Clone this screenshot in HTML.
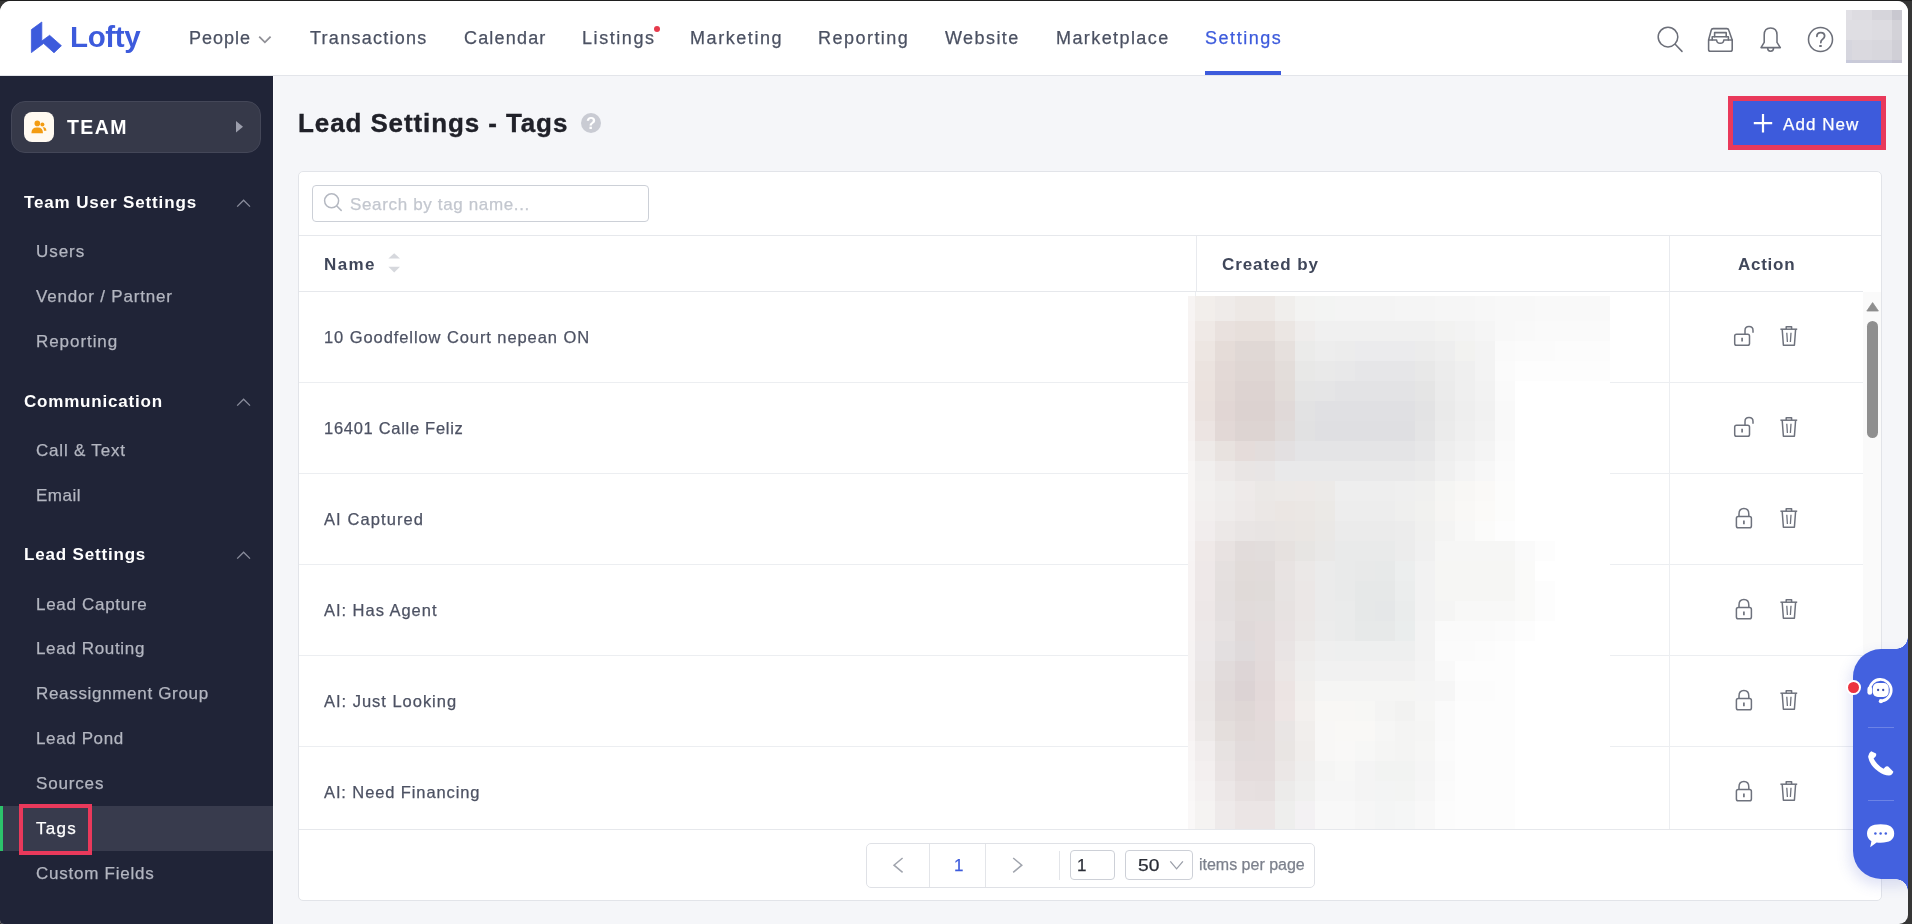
<!DOCTYPE html>
<html><head><meta charset="utf-8"><title>Lead Settings - Tags</title>
<style>
html,body{margin:0;padding:0;}
body{width:1912px;height:924px;overflow:hidden;background:#363636;position:relative;font-family:"Liberation Sans",sans-serif;}
#win{position:absolute;left:0;top:1px;width:1908px;height:923px;border-radius:11px 11px 9px 4px;overflow:hidden;background:#f5f6f9;}
#in{position:absolute;left:0;top:-1px;width:1912px;height:924px;}
.a{position:absolute;box-sizing:border-box;}
.t{position:absolute;white-space:nowrap;line-height:1;font-family:"Liberation Sans",sans-serif;-webkit-font-smoothing:antialiased;will-change:transform;}
svg{position:absolute;overflow:visible;}
</style></head><body>
<div class="a" style="left:0;top:0;width:1912px;height:1px;background:#1f1f1f;"></div>
<div id="win"><div id="in">
<!-- header -->
<div class="a" style="left:0;top:0;width:1912px;height:75px;background:#fff;"></div>
<div class="a" style="left:0;top:75px;width:1912px;height:1px;background:#e3e5ea;"></div>
<svg style="left:0;top:0" width="80" height="70" viewBox="0 0 80 70"><polygon points="31.4,29.6 41.8,22 41.8,41 49.6,35.3 61.4,45.7 54,52.8 43.6,43.4 31.4,52.6" fill="#3d5bdc" stroke="#3d5bdc" stroke-width="0.8" stroke-linejoin="round"/></svg>
<svg style="left:0;top:0" width="300" height="70"><polyline points="259.2,36.6 264.9,42.3 270.6,36.6" fill="none" stroke="#909097" stroke-width="1.8"/></svg>
<div class="a" style="left:653.5px;top:25.7px;width:6px;height:6px;border-radius:50%;background:#e63a4c;"></div>
<div class="a" style="left:1205px;top:71px;width:76px;height:4px;background:#3d5bdc;"></div>
<!-- header icons -->
<svg style="left:1650px;top:20px" width="250" height="40" viewBox="1650 20 250 40" fill="none" stroke="#6c6f79" stroke-width="1.55" stroke-linecap="round" stroke-linejoin="round">
  <circle cx="1668" cy="37.1" r="9.8"/><line x1="1675.2" y1="44.3" x2="1682" y2="51.4"/>
  <path d="M1708.6 40 L1711.2 30.2 Q1711.6 28.6 1713.2 28.6 L1726.8 28.6 Q1728.4 28.6 1728.8 30.2 L1732.2 40 L1732.2 49.4 Q1732.2 51.2 1730.4 51.2 L1710.4 51.2 Q1708.6 51.2 1708.6 49.4 Z"/>
  <path d="M1708.8 40 L1716.6 40 Q1716.8 43.3 1720.2 43.3 Q1723.6 43.3 1723.8 40 L1732.2 40"/>
  <path d="M1712.2 40 L1712.2 36.8 L1728.4 36.8 L1728.4 40"/><path d="M1714.6 36.8 L1714.6 32.6 L1726.2 32.6 L1726.2 36.8"/>
  <path d="M1761 47.6 L1764.2 42.4 L1764.2 35 Q1764.2 28 1770.6 28 Q1777 28 1777 35 L1777 42.4 L1780.3 47.6 Z"/>
  <path d="M1767.6 47.8 Q1767.6 51.2 1770.6 51.2 Q1773.6 51.2 1773.6 47.8"/>
  <circle cx="1820.5" cy="39.5" r="12"/>
  <path d="M1816.9 36.3 Q1816.9 32.7 1820.8 32.7 Q1824.6 32.7 1824.6 36.1 Q1824.6 38.1 1822.6 39.3 Q1820.8 40.3 1820.8 42.6" stroke-width="1.8"/>
</svg>
<div class="a" style="left:1819.4px;top:44.6px;width:2.8px;height:2.8px;border-radius:50%;background:#6c6f79;"></div>
<!-- avatar pixelated -->
<svg style="left:1846px;top:10px" width="56" height="53" shape-rendering="crispEdges">
<rect x="0" y="0" width="6" height="10" fill="#e1e0e5"/>
<rect x="6" y="0" width="20" height="10" fill="#dddce1"/>
<rect x="26" y="0" width="20" height="10" fill="#d6d5db"/>
<rect x="46" y="0" width="10" height="10" fill="#c9c8d0"/>
<rect x="0" y="10" width="6" height="20" fill="#dfdee3"/>
<rect x="6" y="10" width="20" height="20" fill="#dfdee3"/>
<rect x="26" y="10" width="20" height="20" fill="#dddce1"/>
<rect x="46" y="10" width="10" height="20" fill="#d3d2d8"/>
<rect x="0" y="30" width="6" height="20" fill="#d6d6de"/>
<rect x="6" y="30" width="20" height="20" fill="#dad9df"/>
<rect x="26" y="30" width="20" height="20" fill="#d8d7dd"/>
<rect x="46" y="30" width="10" height="20" fill="#d0cfd6"/>
<rect x="0" y="50" width="6" height="3" fill="#c8cadb"/>
<rect x="6" y="50" width="20" height="3" fill="#c9cad8"/>
<rect x="26" y="50" width="20" height="3" fill="#c9cad8"/>
<rect x="46" y="50" width="10" height="3" fill="#c5c4d2"/>
</svg>

<!-- sidebar -->
<div class="a" style="left:0;top:76px;width:273px;height:848px;background:#202437;"></div>
<div class="a" style="left:273px;top:76px;width:1px;height:848px;background:#fbfbfd;"></div>
<div class="a" style="left:11px;top:101px;width:250px;height:52px;border-radius:14px;background:#363949;border:1px solid #444758;"></div>
<div class="a" style="left:24px;top:112px;width:30px;height:30px;border-radius:8px;background:#fffaf1;"></div>
<svg style="left:0;top:0" width="60" height="150">
  <circle cx="37.3" cy="123.4" r="2.8" fill="#f39c12"/>
  <path d="M31.4 133.2 Q31.4 127.6 36.7 127.6 L37.9 127.6 Q43 127.6 43 133.2 Z" fill="#f39c12"/>
  <circle cx="42.4" cy="124.6" r="2" fill="#f39c12"/>
  <path d="M43.6 127.2 Q46.4 127.6 46.4 130.8 L44 130.8 Q44 128.6 42.6 127.6 Z" fill="#f39c12"/>
</svg>
<svg style="left:0;top:0" width="273" height="600">
  <polygon points="236,121 243,126.8 236,132.6" fill="#9c9eac"/>
  <polyline points="237.2,206.6 243.6,200.2 250,206.6" fill="none" stroke="#8a8d9c" stroke-width="1.3"/>
  <polyline points="237.2,405.6 243.6,399.2 250,405.6" fill="none" stroke="#8a8d9c" stroke-width="1.3"/>
  <polyline points="237.2,558.6 243.6,552.2 250,558.6" fill="none" stroke="#8a8d9c" stroke-width="1.3"/>
</svg>
<div class="a" style="left:0;top:806px;width:273px;height:45px;background:#383b4d;"></div>
<div class="a" style="left:0;top:806px;width:3px;height:45px;background:#2cc36b;"></div>
<div class="a" style="left:19px;top:804px;width:73px;height:51px;border:4.5px solid #e9395b;"></div>

<!-- content -->
<div class="a" style="left:581px;top:113px;width:20.2px;height:20.2px;border-radius:50%;background:#c9cbd3;"></div>
<div class="t" style="left:586px;top:114.6px;font-size:16.5px;font-weight:700;color:#fff;">?</div>
<div class="a" style="left:1728px;top:96px;width:158px;height:54px;background:#e9395b;"></div>
<div class="a" style="left:1733px;top:101px;width:148px;height:44px;background:#3d5bdc;"></div>
<svg style="left:0;top:0" width="1900" height="150"><path d="M1763 114 L1763 132.4 M1753.8 123.2 L1772.2 123.2" stroke="#fff" stroke-width="2.2"/></svg>

<div class="a" style="left:298px;top:171px;width:1584px;height:730px;background:#fff;border:1px solid #e2e4e9;border-radius:5px;"></div>
<div class="a" style="left:312px;top:185px;width:337px;height:37px;border:1px solid #ccd0d7;border-radius:4px;background:#fff;"></div>
<svg style="left:0;top:0" width="400" height="240" fill="none" stroke="#b4b8c1" stroke-width="1.5" stroke-linecap="round"><circle cx="331.6" cy="200.8" r="7"/><line x1="336.8" y1="206" x2="341.2" y2="210.4"/></svg>
<div class="a" style="left:299px;top:235px;width:1582px;height:1px;background:#e6e8ec;"></div>
<div class="a" style="left:299px;top:291px;width:1564px;height:1px;background:#e6e8ec;"></div>
<div class="a" style="left:1196px;top:236px;width:1px;height:55px;background:#e8eaee;"></div>
<div class="a" style="left:1669px;top:236px;width:1px;height:55px;background:#e8eaee;"></div>
<div class="a" style="left:1195px;top:292px;width:1px;height:537px;background:#eceef1;"></div>
<div class="a" style="left:1669px;top:292px;width:1px;height:537px;background:#eceef1;"></div>
<div class="a" style="left:299px;top:382px;width:1564px;height:1px;background:#eceef1;"></div>
<div class="a" style="left:299px;top:473px;width:1564px;height:1px;background:#eceef1;"></div>
<div class="a" style="left:299px;top:564px;width:1564px;height:1px;background:#eceef1;"></div>
<div class="a" style="left:299px;top:655px;width:1564px;height:1px;background:#eceef1;"></div>
<div class="a" style="left:299px;top:746px;width:1564px;height:1px;background:#eceef1;"></div>
<div class="a" style="left:299px;top:829px;width:1582px;height:1px;background:#e6e8ec;"></div>
<svg style="left:0;top:0" width="420" height="300"><polygon points="388.4,258.6 394.2,253.2 400,258.6" fill="#d6d8dd"/><polygon points="388.4,266.8 394.2,272.4 400,266.8" fill="#d6d8dd"/></svg>
<svg style="left:1188px;top:296px" width="422" height="533" shape-rendering="crispEdges">
<rect x="0" y="0" width="7" height="25" fill="#f7f4f3"/>
<rect x="7" y="0" width="20" height="25" fill="#f2eeeb"/>
<rect x="27" y="0" width="20" height="25" fill="#efebe9"/>
<rect x="47" y="0" width="20" height="25" fill="#ede8e5"/>
<rect x="67" y="0" width="20" height="25" fill="#ede8e5"/>
<rect x="87" y="0" width="20" height="25" fill="#f0eeec"/>
<rect x="107" y="0" width="20" height="25" fill="#f3f3f2"/>
<rect x="127" y="0" width="20" height="25" fill="#f3f4f3"/>
<rect x="147" y="0" width="20" height="25" fill="#f4f4f4"/>
<rect x="167" y="0" width="20" height="25" fill="#f4f4f4"/>
<rect x="187" y="0" width="20" height="25" fill="#f4f4f4"/>
<rect x="207" y="0" width="20" height="25" fill="#f5f5f5"/>
<rect x="227" y="0" width="20" height="25" fill="#f5f5f5"/>
<rect x="247" y="0" width="20" height="25" fill="#f6f6f6"/>
<rect x="267" y="0" width="20" height="25" fill="#f6f6f6"/>
<rect x="287" y="0" width="20" height="25" fill="#f7f7f7"/>
<rect x="307" y="0" width="20" height="25" fill="#f8f8f8"/>
<rect x="327" y="0" width="20" height="25" fill="#f8f8f8"/>
<rect x="347" y="0" width="20" height="25" fill="#f9f9f9"/>
<rect x="367" y="0" width="20" height="25" fill="#f9f9f9"/>
<rect x="387" y="0" width="20" height="25" fill="#f9f9f9"/>
<rect x="407" y="0" width="15" height="25" fill="#f9f9f9"/>
<rect x="0" y="25" width="7" height="20" fill="#f7f3f2"/>
<rect x="7" y="25" width="20" height="20" fill="#efe9e6"/>
<rect x="27" y="25" width="20" height="20" fill="#e9e1de"/>
<rect x="47" y="25" width="20" height="20" fill="#e7dfdb"/>
<rect x="67" y="25" width="20" height="20" fill="#e7dfdb"/>
<rect x="87" y="25" width="20" height="20" fill="#ebe6e3"/>
<rect x="107" y="25" width="20" height="20" fill="#efedec"/>
<rect x="127" y="25" width="20" height="20" fill="#f0f0f0"/>
<rect x="147" y="25" width="20" height="20" fill="#f0f0f0"/>
<rect x="167" y="25" width="20" height="20" fill="#f0f0f0"/>
<rect x="187" y="25" width="20" height="20" fill="#f0f0f0"/>
<rect x="207" y="25" width="20" height="20" fill="#f0f0f0"/>
<rect x="227" y="25" width="20" height="20" fill="#f0f0f0"/>
<rect x="247" y="25" width="20" height="20" fill="#f2f2f1"/>
<rect x="267" y="25" width="20" height="20" fill="#f3f3f3"/>
<rect x="287" y="25" width="20" height="20" fill="#f5f5f5"/>
<rect x="307" y="25" width="20" height="20" fill="#f8f8f8"/>
<rect x="327" y="25" width="20" height="20" fill="#f9f9f9"/>
<rect x="347" y="25" width="20" height="20" fill="#fafafa"/>
<rect x="367" y="25" width="20" height="20" fill="#fafafa"/>
<rect x="387" y="25" width="20" height="20" fill="#fafafa"/>
<rect x="407" y="25" width="15" height="20" fill="#fafafa"/>
<rect x="0" y="45" width="7" height="20" fill="#f7f2f1"/>
<rect x="7" y="45" width="20" height="20" fill="#ede6e2"/>
<rect x="27" y="45" width="20" height="20" fill="#e5dcd8"/>
<rect x="47" y="45" width="20" height="20" fill="#e0d8d5"/>
<rect x="67" y="45" width="20" height="20" fill="#e0d8d5"/>
<rect x="87" y="45" width="20" height="20" fill="#e6e0dd"/>
<rect x="107" y="45" width="20" height="20" fill="#ebebea"/>
<rect x="127" y="45" width="20" height="20" fill="#ededed"/>
<rect x="147" y="45" width="20" height="20" fill="#ececec"/>
<rect x="167" y="45" width="20" height="20" fill="#ebebed"/>
<rect x="187" y="45" width="20" height="20" fill="#ebebed"/>
<rect x="207" y="45" width="20" height="20" fill="#ebebed"/>
<rect x="227" y="45" width="20" height="20" fill="#ececec"/>
<rect x="247" y="45" width="20" height="20" fill="#eeeeee"/>
<rect x="267" y="45" width="20" height="20" fill="#f2f2f0"/>
<rect x="287" y="45" width="20" height="20" fill="#f3f3f3"/>
<rect x="307" y="45" width="20" height="20" fill="#fafafa"/>
<rect x="327" y="45" width="20" height="20" fill="#fbfbfb"/>
<rect x="347" y="45" width="20" height="20" fill="#fbfbfb"/>
<rect x="367" y="45" width="20" height="20" fill="#fcfcfc"/>
<rect x="387" y="45" width="20" height="20" fill="#fcfcfc"/>
<rect x="407" y="45" width="15" height="20" fill="#fcfcfc"/>
<rect x="0" y="65" width="7" height="20" fill="#f7f2f1"/>
<rect x="7" y="65" width="20" height="20" fill="#ebe3df"/>
<rect x="27" y="65" width="20" height="20" fill="#e3d9d6"/>
<rect x="47" y="65" width="20" height="20" fill="#dfd6d3"/>
<rect x="67" y="65" width="20" height="20" fill="#dfd6d3"/>
<rect x="87" y="65" width="20" height="20" fill="#e3ddda"/>
<rect x="107" y="65" width="20" height="20" fill="#e8e8e7"/>
<rect x="127" y="65" width="20" height="20" fill="#e9e9e9"/>
<rect x="147" y="65" width="20" height="20" fill="#e8e8e9"/>
<rect x="167" y="65" width="20" height="20" fill="#e6e6e8"/>
<rect x="187" y="65" width="20" height="20" fill="#e6e6e8"/>
<rect x="207" y="65" width="20" height="20" fill="#e6e6e8"/>
<rect x="227" y="65" width="20" height="20" fill="#e8e8e8"/>
<rect x="247" y="65" width="20" height="20" fill="#ececec"/>
<rect x="267" y="65" width="20" height="20" fill="#efefef"/>
<rect x="287" y="65" width="20" height="20" fill="#f3f3f3"/>
<rect x="307" y="65" width="20" height="20" fill="#fbfbfb"/>
<rect x="327" y="65" width="20" height="20" fill="#fdfdfd"/>
<rect x="347" y="65" width="20" height="20" fill="#fdfdfd"/>
<rect x="367" y="65" width="20" height="20" fill="#fdfdfd"/>
<rect x="387" y="65" width="20" height="20" fill="#fdfdfd"/>
<rect x="407" y="65" width="15" height="20" fill="#fdfdfd"/>
<rect x="0" y="85" width="7" height="20" fill="#f6f1f0"/>
<rect x="7" y="85" width="20" height="20" fill="#ebe2de"/>
<rect x="27" y="85" width="20" height="20" fill="#e2d8d5"/>
<rect x="47" y="85" width="20" height="20" fill="#ddd3d1"/>
<rect x="67" y="85" width="20" height="20" fill="#ddd3d1"/>
<rect x="87" y="85" width="20" height="20" fill="#e2dcd9"/>
<rect x="107" y="85" width="20" height="20" fill="#e5e5e5"/>
<rect x="127" y="85" width="20" height="20" fill="#e5e5e6"/>
<rect x="147" y="85" width="20" height="20" fill="#e3e3e5"/>
<rect x="167" y="85" width="20" height="20" fill="#e3e3e5"/>
<rect x="187" y="85" width="20" height="20" fill="#e3e3e5"/>
<rect x="207" y="85" width="20" height="20" fill="#e3e3e5"/>
<rect x="227" y="85" width="20" height="20" fill="#e5e5e5"/>
<rect x="247" y="85" width="20" height="20" fill="#ebebeb"/>
<rect x="267" y="85" width="20" height="20" fill="#efefef"/>
<rect x="287" y="85" width="20" height="20" fill="#f2f2f2"/>
<rect x="307" y="85" width="20" height="20" fill="#fafafa"/>
<rect x="327" y="85" width="20" height="20" fill="#ffffff"/>
<rect x="347" y="85" width="20" height="20" fill="#ffffff"/>
<rect x="367" y="85" width="20" height="20" fill="#ffffff"/>
<rect x="387" y="85" width="20" height="20" fill="#ffffff"/>
<rect x="407" y="85" width="15" height="20" fill="#ffffff"/>
<rect x="0" y="105" width="7" height="20" fill="#f6f1f0"/>
<rect x="7" y="105" width="20" height="20" fill="#eae1de"/>
<rect x="27" y="105" width="20" height="20" fill="#e1d6d4"/>
<rect x="47" y="105" width="20" height="20" fill="#dcd2d0"/>
<rect x="67" y="105" width="20" height="20" fill="#dcd2d0"/>
<rect x="87" y="105" width="20" height="20" fill="#e0d9d8"/>
<rect x="107" y="105" width="20" height="20" fill="#e2e2e3"/>
<rect x="127" y="105" width="20" height="20" fill="#e0e0e3"/>
<rect x="147" y="105" width="20" height="20" fill="#e0e0e3"/>
<rect x="167" y="105" width="20" height="20" fill="#e0e0e3"/>
<rect x="187" y="105" width="20" height="20" fill="#e0e0e3"/>
<rect x="207" y="105" width="20" height="20" fill="#e0e0e3"/>
<rect x="227" y="105" width="20" height="20" fill="#e3e3e4"/>
<rect x="247" y="105" width="20" height="20" fill="#eaeaea"/>
<rect x="267" y="105" width="20" height="20" fill="#eeeeee"/>
<rect x="287" y="105" width="20" height="20" fill="#f1f1f1"/>
<rect x="307" y="105" width="20" height="20" fill="#f9f9f9"/>
<rect x="327" y="105" width="20" height="20" fill="#ffffff"/>
<rect x="347" y="105" width="20" height="20" fill="#ffffff"/>
<rect x="367" y="105" width="20" height="20" fill="#ffffff"/>
<rect x="387" y="105" width="20" height="20" fill="#ffffff"/>
<rect x="407" y="105" width="15" height="20" fill="#ffffff"/>
<rect x="0" y="125" width="7" height="20" fill="#f6f2f1"/>
<rect x="7" y="125" width="20" height="20" fill="#ece4e2"/>
<rect x="27" y="125" width="20" height="20" fill="#e2d8d6"/>
<rect x="47" y="125" width="20" height="20" fill="#ddd4d2"/>
<rect x="67" y="125" width="20" height="20" fill="#ddd4d2"/>
<rect x="87" y="125" width="20" height="20" fill="#e0dbda"/>
<rect x="107" y="125" width="20" height="20" fill="#e1e1e2"/>
<rect x="127" y="125" width="20" height="20" fill="#dfdfe2"/>
<rect x="147" y="125" width="20" height="20" fill="#dfdfe2"/>
<rect x="167" y="125" width="20" height="20" fill="#dfdfe2"/>
<rect x="187" y="125" width="20" height="20" fill="#dfdfe2"/>
<rect x="207" y="125" width="20" height="20" fill="#dfdfe2"/>
<rect x="227" y="125" width="20" height="20" fill="#e4e4e5"/>
<rect x="247" y="125" width="20" height="20" fill="#ebebeb"/>
<rect x="267" y="125" width="20" height="20" fill="#efefef"/>
<rect x="287" y="125" width="20" height="20" fill="#f2f2f2"/>
<rect x="307" y="125" width="20" height="20" fill="#f9f9f9"/>
<rect x="327" y="125" width="20" height="20" fill="#ffffff"/>
<rect x="347" y="125" width="20" height="20" fill="#ffffff"/>
<rect x="367" y="125" width="20" height="20" fill="#ffffff"/>
<rect x="387" y="125" width="20" height="20" fill="#ffffff"/>
<rect x="407" y="125" width="15" height="20" fill="#ffffff"/>
<rect x="0" y="145" width="7" height="20" fill="#f7f4f3"/>
<rect x="7" y="145" width="20" height="20" fill="#eeeae8"/>
<rect x="27" y="145" width="20" height="20" fill="#e8e2df"/>
<rect x="47" y="145" width="20" height="20" fill="#e5dcda"/>
<rect x="67" y="145" width="20" height="20" fill="#e3dddc"/>
<rect x="87" y="145" width="20" height="20" fill="#e3e0e1"/>
<rect x="107" y="145" width="20" height="20" fill="#e4e4e6"/>
<rect x="127" y="145" width="20" height="20" fill="#e4e4e6"/>
<rect x="147" y="145" width="20" height="20" fill="#e4e4e6"/>
<rect x="167" y="145" width="20" height="20" fill="#e4e4e6"/>
<rect x="187" y="145" width="20" height="20" fill="#e4e4e6"/>
<rect x="207" y="145" width="20" height="20" fill="#e4e4e6"/>
<rect x="227" y="145" width="20" height="20" fill="#e7e7e8"/>
<rect x="247" y="145" width="20" height="20" fill="#eeeeee"/>
<rect x="267" y="145" width="20" height="20" fill="#f1f1f1"/>
<rect x="287" y="145" width="20" height="20" fill="#f4f4f4"/>
<rect x="307" y="145" width="20" height="20" fill="#fafafa"/>
<rect x="327" y="145" width="20" height="20" fill="#ffffff"/>
<rect x="347" y="145" width="20" height="20" fill="#ffffff"/>
<rect x="367" y="145" width="20" height="20" fill="#ffffff"/>
<rect x="387" y="145" width="20" height="20" fill="#ffffff"/>
<rect x="407" y="145" width="15" height="20" fill="#ffffff"/>
<rect x="0" y="165" width="7" height="20" fill="#f8f6f5"/>
<rect x="7" y="165" width="20" height="20" fill="#f1efee"/>
<rect x="27" y="165" width="20" height="20" fill="#ede9e8"/>
<rect x="47" y="165" width="20" height="20" fill="#e9e5e4"/>
<rect x="67" y="165" width="20" height="20" fill="#e8e5e5"/>
<rect x="87" y="165" width="20" height="20" fill="#e9e9ea"/>
<rect x="107" y="165" width="20" height="20" fill="#e9e9ea"/>
<rect x="127" y="165" width="20" height="20" fill="#e9e9ea"/>
<rect x="147" y="165" width="20" height="20" fill="#e9e9ea"/>
<rect x="167" y="165" width="20" height="20" fill="#e9e9ea"/>
<rect x="187" y="165" width="20" height="20" fill="#e9e9ea"/>
<rect x="207" y="165" width="20" height="20" fill="#e9e9ea"/>
<rect x="227" y="165" width="20" height="20" fill="#ebebeb"/>
<rect x="247" y="165" width="20" height="20" fill="#f0f0f0"/>
<rect x="267" y="165" width="20" height="20" fill="#f4f4f4"/>
<rect x="287" y="165" width="20" height="20" fill="#f7f7f7"/>
<rect x="307" y="165" width="20" height="20" fill="#fbfbfb"/>
<rect x="327" y="165" width="20" height="20" fill="#ffffff"/>
<rect x="347" y="165" width="20" height="20" fill="#ffffff"/>
<rect x="367" y="165" width="20" height="20" fill="#ffffff"/>
<rect x="387" y="165" width="20" height="20" fill="#ffffff"/>
<rect x="407" y="165" width="15" height="20" fill="#ffffff"/>
<rect x="0" y="185" width="7" height="20" fill="#f8f6f5"/>
<rect x="7" y="185" width="20" height="20" fill="#f2f0ef"/>
<rect x="27" y="185" width="20" height="20" fill="#efedec"/>
<rect x="47" y="185" width="20" height="20" fill="#eeeae9"/>
<rect x="67" y="185" width="20" height="20" fill="#ebe8e6"/>
<rect x="87" y="185" width="20" height="20" fill="#ece9e7"/>
<rect x="107" y="185" width="20" height="20" fill="#ede9e7"/>
<rect x="127" y="185" width="20" height="20" fill="#eceae8"/>
<rect x="147" y="185" width="20" height="20" fill="#eeeeee"/>
<rect x="167" y="185" width="20" height="20" fill="#eeeeee"/>
<rect x="187" y="185" width="20" height="20" fill="#eeeeee"/>
<rect x="207" y="185" width="20" height="20" fill="#efefef"/>
<rect x="227" y="185" width="20" height="20" fill="#f0f0ef"/>
<rect x="247" y="185" width="20" height="20" fill="#f5f5f3"/>
<rect x="267" y="185" width="20" height="20" fill="#f8f7f5"/>
<rect x="287" y="185" width="20" height="20" fill="#faf9f7"/>
<rect x="307" y="185" width="20" height="20" fill="#fcfcfb"/>
<rect x="327" y="185" width="20" height="20" fill="#ffffff"/>
<rect x="347" y="185" width="20" height="20" fill="#ffffff"/>
<rect x="367" y="185" width="20" height="20" fill="#ffffff"/>
<rect x="387" y="185" width="20" height="20" fill="#ffffff"/>
<rect x="407" y="185" width="15" height="20" fill="#ffffff"/>
<rect x="0" y="205" width="7" height="20" fill="#f8f5f5"/>
<rect x="7" y="205" width="20" height="20" fill="#f2efee"/>
<rect x="27" y="205" width="20" height="20" fill="#efeceb"/>
<rect x="47" y="205" width="20" height="20" fill="#ede9e8"/>
<rect x="67" y="205" width="20" height="20" fill="#ebe7e5"/>
<rect x="87" y="205" width="20" height="20" fill="#ebe6e3"/>
<rect x="107" y="205" width="20" height="20" fill="#ebe7e4"/>
<rect x="127" y="205" width="20" height="20" fill="#ebe9e6"/>
<rect x="147" y="205" width="20" height="20" fill="#ededed"/>
<rect x="167" y="205" width="20" height="20" fill="#ededed"/>
<rect x="187" y="205" width="20" height="20" fill="#ededed"/>
<rect x="207" y="205" width="20" height="20" fill="#efefee"/>
<rect x="227" y="205" width="20" height="20" fill="#f1f1ef"/>
<rect x="247" y="205" width="20" height="20" fill="#f6f5f3"/>
<rect x="267" y="205" width="20" height="20" fill="#f9f8f6"/>
<rect x="287" y="205" width="20" height="20" fill="#fbfaf8"/>
<rect x="307" y="205" width="20" height="20" fill="#fcfcfb"/>
<rect x="327" y="205" width="20" height="20" fill="#ffffff"/>
<rect x="347" y="205" width="20" height="20" fill="#ffffff"/>
<rect x="367" y="205" width="20" height="20" fill="#ffffff"/>
<rect x="387" y="205" width="20" height="20" fill="#ffffff"/>
<rect x="407" y="205" width="15" height="20" fill="#ffffff"/>
<rect x="0" y="225" width="7" height="20" fill="#f8f5f5"/>
<rect x="7" y="225" width="20" height="20" fill="#f1eded"/>
<rect x="27" y="225" width="20" height="20" fill="#ece8e7"/>
<rect x="47" y="225" width="20" height="20" fill="#e9e5e4"/>
<rect x="67" y="225" width="20" height="20" fill="#e8e4e3"/>
<rect x="87" y="225" width="20" height="20" fill="#e9e5e3"/>
<rect x="107" y="225" width="20" height="20" fill="#eae6e3"/>
<rect x="127" y="225" width="20" height="20" fill="#eae8e6"/>
<rect x="147" y="225" width="20" height="20" fill="#ebebeb"/>
<rect x="167" y="225" width="20" height="20" fill="#ebebeb"/>
<rect x="187" y="225" width="20" height="20" fill="#ebebeb"/>
<rect x="207" y="225" width="20" height="20" fill="#ececec"/>
<rect x="227" y="225" width="20" height="20" fill="#f0f0ef"/>
<rect x="247" y="225" width="20" height="20" fill="#f4f4f3"/>
<rect x="267" y="225" width="20" height="20" fill="#f8f8f7"/>
<rect x="287" y="225" width="20" height="20" fill="#fbfbfa"/>
<rect x="307" y="225" width="20" height="20" fill="#fdfdfd"/>
<rect x="327" y="225" width="20" height="20" fill="#ffffff"/>
<rect x="347" y="225" width="20" height="20" fill="#ffffff"/>
<rect x="367" y="225" width="20" height="20" fill="#ffffff"/>
<rect x="387" y="225" width="20" height="20" fill="#ffffff"/>
<rect x="407" y="225" width="15" height="20" fill="#ffffff"/>
<rect x="0" y="245" width="7" height="20" fill="#f7f4f4"/>
<rect x="7" y="245" width="20" height="20" fill="#efe9e8"/>
<rect x="27" y="245" width="20" height="20" fill="#e8e2e1"/>
<rect x="47" y="245" width="20" height="20" fill="#e2dcdb"/>
<rect x="67" y="245" width="20" height="20" fill="#e2dddc"/>
<rect x="87" y="245" width="20" height="20" fill="#e6e1df"/>
<rect x="107" y="245" width="20" height="20" fill="#e7e5e3"/>
<rect x="127" y="245" width="20" height="20" fill="#e9e8e7"/>
<rect x="147" y="245" width="20" height="20" fill="#e9eaea"/>
<rect x="167" y="245" width="20" height="20" fill="#e9eaea"/>
<rect x="187" y="245" width="20" height="20" fill="#e9eaea"/>
<rect x="207" y="245" width="20" height="20" fill="#ececec"/>
<rect x="227" y="245" width="20" height="20" fill="#f0f0f0"/>
<rect x="247" y="245" width="20" height="20" fill="#f6f6f5"/>
<rect x="267" y="245" width="20" height="20" fill="#f6f6f5"/>
<rect x="287" y="245" width="20" height="20" fill="#f6f6f5"/>
<rect x="307" y="245" width="20" height="20" fill="#f6f6f5"/>
<rect x="327" y="245" width="20" height="20" fill="#fafafa"/>
<rect x="347" y="245" width="20" height="20" fill="#fdfdfd"/>
<rect x="367" y="245" width="20" height="20" fill="#ffffff"/>
<rect x="387" y="245" width="20" height="20" fill="#ffffff"/>
<rect x="407" y="245" width="15" height="20" fill="#ffffff"/>
<rect x="0" y="265" width="7" height="20" fill="#f7f3f3"/>
<rect x="7" y="265" width="20" height="20" fill="#eee8e8"/>
<rect x="27" y="265" width="20" height="20" fill="#e5e0df"/>
<rect x="47" y="265" width="20" height="20" fill="#e1dbd9"/>
<rect x="67" y="265" width="20" height="20" fill="#e1dbda"/>
<rect x="87" y="265" width="20" height="20" fill="#e8e3e2"/>
<rect x="107" y="265" width="20" height="20" fill="#ebe8e7"/>
<rect x="127" y="265" width="20" height="20" fill="#ebebeb"/>
<rect x="147" y="265" width="20" height="20" fill="#e9eaea"/>
<rect x="167" y="265" width="20" height="20" fill="#e8e9e9"/>
<rect x="187" y="265" width="20" height="20" fill="#e7e9e9"/>
<rect x="207" y="265" width="20" height="20" fill="#eceeee"/>
<rect x="227" y="265" width="20" height="20" fill="#f2f2f2"/>
<rect x="247" y="265" width="20" height="20" fill="#f6f6f4"/>
<rect x="267" y="265" width="20" height="20" fill="#f6f6f4"/>
<rect x="287" y="265" width="20" height="20" fill="#f6f6f4"/>
<rect x="307" y="265" width="20" height="20" fill="#f6f6f4"/>
<rect x="327" y="265" width="20" height="20" fill="#fafaf9"/>
<rect x="347" y="265" width="20" height="20" fill="#ffffff"/>
<rect x="367" y="265" width="20" height="20" fill="#ffffff"/>
<rect x="387" y="265" width="20" height="20" fill="#ffffff"/>
<rect x="407" y="265" width="15" height="20" fill="#ffffff"/>
<rect x="0" y="285" width="7" height="20" fill="#f7f3f3"/>
<rect x="7" y="285" width="20" height="20" fill="#eee8e8"/>
<rect x="27" y="285" width="20" height="20" fill="#e4dfde"/>
<rect x="47" y="285" width="20" height="20" fill="#e0dad8"/>
<rect x="67" y="285" width="20" height="20" fill="#e0dbd9"/>
<rect x="87" y="285" width="20" height="20" fill="#e7e3e2"/>
<rect x="107" y="285" width="20" height="20" fill="#ebe7e6"/>
<rect x="127" y="285" width="20" height="20" fill="#ebebeb"/>
<rect x="147" y="285" width="20" height="20" fill="#e9eaea"/>
<rect x="167" y="285" width="20" height="20" fill="#e6e8e8"/>
<rect x="187" y="285" width="20" height="20" fill="#e6e8e8"/>
<rect x="207" y="285" width="20" height="20" fill="#ebeded"/>
<rect x="227" y="285" width="20" height="20" fill="#f2f2f2"/>
<rect x="247" y="285" width="20" height="20" fill="#f6f6f4"/>
<rect x="267" y="285" width="20" height="20" fill="#f6f6f4"/>
<rect x="287" y="285" width="20" height="20" fill="#f6f6f4"/>
<rect x="307" y="285" width="20" height="20" fill="#f6f6f4"/>
<rect x="327" y="285" width="20" height="20" fill="#fafaf9"/>
<rect x="347" y="285" width="20" height="20" fill="#fdfdfd"/>
<rect x="367" y="285" width="20" height="20" fill="#ffffff"/>
<rect x="387" y="285" width="20" height="20" fill="#ffffff"/>
<rect x="407" y="285" width="15" height="20" fill="#ffffff"/>
<rect x="0" y="305" width="7" height="20" fill="#f7f3f3"/>
<rect x="7" y="305" width="20" height="20" fill="#ede7e7"/>
<rect x="27" y="305" width="20" height="20" fill="#e4dfdf"/>
<rect x="47" y="305" width="20" height="20" fill="#e1dbda"/>
<rect x="67" y="305" width="20" height="20" fill="#e1dcdb"/>
<rect x="87" y="305" width="20" height="20" fill="#e7e2e1"/>
<rect x="107" y="305" width="20" height="20" fill="#ebe7e6"/>
<rect x="127" y="305" width="20" height="20" fill="#ebebeb"/>
<rect x="147" y="305" width="20" height="20" fill="#eaebeb"/>
<rect x="167" y="305" width="20" height="20" fill="#e6e8e8"/>
<rect x="187" y="305" width="20" height="20" fill="#e5e7e8"/>
<rect x="207" y="305" width="20" height="20" fill="#eaecec"/>
<rect x="227" y="305" width="20" height="20" fill="#f2f2f2"/>
<rect x="247" y="305" width="20" height="20" fill="#f5f5f4"/>
<rect x="267" y="305" width="20" height="20" fill="#f8f8f7"/>
<rect x="287" y="305" width="20" height="20" fill="#f8f8f7"/>
<rect x="307" y="305" width="20" height="20" fill="#f8f8f7"/>
<rect x="327" y="305" width="20" height="20" fill="#fafaf9"/>
<rect x="347" y="305" width="20" height="20" fill="#fdfdfd"/>
<rect x="367" y="305" width="20" height="20" fill="#ffffff"/>
<rect x="387" y="305" width="20" height="20" fill="#ffffff"/>
<rect x="407" y="305" width="15" height="20" fill="#ffffff"/>
<rect x="0" y="325" width="7" height="20" fill="#f7f3f3"/>
<rect x="7" y="325" width="20" height="20" fill="#ede8e8"/>
<rect x="27" y="325" width="20" height="20" fill="#e6e1e1"/>
<rect x="47" y="325" width="20" height="20" fill="#e0d9d9"/>
<rect x="67" y="325" width="20" height="20" fill="#e3dbdb"/>
<rect x="87" y="325" width="20" height="20" fill="#e8e2e2"/>
<rect x="107" y="325" width="20" height="20" fill="#ebe8e7"/>
<rect x="127" y="325" width="20" height="20" fill="#ececec"/>
<rect x="147" y="325" width="20" height="20" fill="#eaebeb"/>
<rect x="167" y="325" width="20" height="20" fill="#e7e9e9"/>
<rect x="187" y="325" width="20" height="20" fill="#e7e9e9"/>
<rect x="207" y="325" width="20" height="20" fill="#eaeded"/>
<rect x="227" y="325" width="20" height="20" fill="#f3f3f3"/>
<rect x="247" y="325" width="20" height="20" fill="#fafafa"/>
<rect x="267" y="325" width="20" height="20" fill="#fafafa"/>
<rect x="287" y="325" width="20" height="20" fill="#fafafa"/>
<rect x="307" y="325" width="20" height="20" fill="#fbfbfb"/>
<rect x="327" y="325" width="20" height="20" fill="#fdfdfd"/>
<rect x="347" y="325" width="20" height="20" fill="#ffffff"/>
<rect x="367" y="325" width="20" height="20" fill="#ffffff"/>
<rect x="387" y="325" width="20" height="20" fill="#ffffff"/>
<rect x="407" y="325" width="15" height="20" fill="#ffffff"/>
<rect x="0" y="345" width="7" height="20" fill="#f6f3f3"/>
<rect x="7" y="345" width="20" height="20" fill="#ece8e9"/>
<rect x="27" y="345" width="20" height="20" fill="#e3dfe0"/>
<rect x="47" y="345" width="20" height="20" fill="#dfdadb"/>
<rect x="67" y="345" width="20" height="20" fill="#e3dbdb"/>
<rect x="87" y="345" width="20" height="20" fill="#e9e4e4"/>
<rect x="107" y="345" width="20" height="20" fill="#eeeceb"/>
<rect x="127" y="345" width="20" height="20" fill="#efefef"/>
<rect x="147" y="345" width="20" height="20" fill="#eeefef"/>
<rect x="167" y="345" width="20" height="20" fill="#eeefef"/>
<rect x="187" y="345" width="20" height="20" fill="#eeefef"/>
<rect x="207" y="345" width="20" height="20" fill="#eeefef"/>
<rect x="227" y="345" width="20" height="20" fill="#f3f3f3"/>
<rect x="247" y="345" width="20" height="20" fill="#fbfbfb"/>
<rect x="267" y="345" width="20" height="20" fill="#fbfbfb"/>
<rect x="287" y="345" width="20" height="20" fill="#fcfcfc"/>
<rect x="307" y="345" width="20" height="20" fill="#fdfdfd"/>
<rect x="327" y="345" width="20" height="20" fill="#ffffff"/>
<rect x="347" y="345" width="20" height="20" fill="#ffffff"/>
<rect x="367" y="345" width="20" height="20" fill="#ffffff"/>
<rect x="387" y="345" width="20" height="20" fill="#ffffff"/>
<rect x="407" y="345" width="15" height="20" fill="#ffffff"/>
<rect x="0" y="365" width="7" height="20" fill="#f6f3f3"/>
<rect x="7" y="365" width="20" height="20" fill="#ebe7e7"/>
<rect x="27" y="365" width="20" height="20" fill="#e1dbdb"/>
<rect x="47" y="365" width="20" height="20" fill="#ddd5d6"/>
<rect x="67" y="365" width="20" height="20" fill="#e3dada"/>
<rect x="87" y="365" width="20" height="20" fill="#ebe6e5"/>
<rect x="107" y="365" width="20" height="20" fill="#efeeed"/>
<rect x="127" y="365" width="20" height="20" fill="#f1f1f1"/>
<rect x="147" y="365" width="20" height="20" fill="#f1f1f1"/>
<rect x="167" y="365" width="20" height="20" fill="#f1f1f1"/>
<rect x="187" y="365" width="20" height="20" fill="#f1f1f1"/>
<rect x="207" y="365" width="20" height="20" fill="#f1f1f1"/>
<rect x="227" y="365" width="20" height="20" fill="#f4f4f4"/>
<rect x="247" y="365" width="20" height="20" fill="#f9f9f9"/>
<rect x="267" y="365" width="20" height="20" fill="#fdfdfd"/>
<rect x="287" y="365" width="20" height="20" fill="#fdfdfd"/>
<rect x="307" y="365" width="20" height="20" fill="#fdfdfd"/>
<rect x="327" y="365" width="20" height="20" fill="#ffffff"/>
<rect x="347" y="365" width="20" height="20" fill="#ffffff"/>
<rect x="367" y="365" width="20" height="20" fill="#ffffff"/>
<rect x="387" y="365" width="20" height="20" fill="#ffffff"/>
<rect x="407" y="365" width="15" height="20" fill="#ffffff"/>
<rect x="0" y="385" width="7" height="20" fill="#f6f2f2"/>
<rect x="7" y="385" width="20" height="20" fill="#ebe6e5"/>
<rect x="27" y="385" width="20" height="20" fill="#e0d9d9"/>
<rect x="47" y="385" width="20" height="20" fill="#dcd3d4"/>
<rect x="67" y="385" width="20" height="20" fill="#e3d9d9"/>
<rect x="87" y="385" width="20" height="20" fill="#ece4e3"/>
<rect x="107" y="385" width="20" height="20" fill="#f1efed"/>
<rect x="127" y="385" width="20" height="20" fill="#f5f5f4"/>
<rect x="147" y="385" width="20" height="20" fill="#f5f5f4"/>
<rect x="167" y="385" width="20" height="20" fill="#f5f5f4"/>
<rect x="187" y="385" width="20" height="20" fill="#f5f5f4"/>
<rect x="207" y="385" width="20" height="20" fill="#f5f5f4"/>
<rect x="227" y="385" width="20" height="20" fill="#f5f5f5"/>
<rect x="247" y="385" width="20" height="20" fill="#f6f6f6"/>
<rect x="267" y="385" width="20" height="20" fill="#fcfcfc"/>
<rect x="287" y="385" width="20" height="20" fill="#fcfcfc"/>
<rect x="307" y="385" width="20" height="20" fill="#fdfdfd"/>
<rect x="327" y="385" width="20" height="20" fill="#ffffff"/>
<rect x="347" y="385" width="20" height="20" fill="#ffffff"/>
<rect x="367" y="385" width="20" height="20" fill="#ffffff"/>
<rect x="387" y="385" width="20" height="20" fill="#ffffff"/>
<rect x="407" y="385" width="15" height="20" fill="#ffffff"/>
<rect x="0" y="405" width="7" height="20" fill="#f6f2f2"/>
<rect x="7" y="405" width="20" height="20" fill="#ebe7e6"/>
<rect x="27" y="405" width="20" height="20" fill="#e1dad9"/>
<rect x="47" y="405" width="20" height="20" fill="#dfd7d6"/>
<rect x="67" y="405" width="20" height="20" fill="#e4dada"/>
<rect x="87" y="405" width="20" height="20" fill="#ede5e4"/>
<rect x="107" y="405" width="20" height="20" fill="#f3f0ee"/>
<rect x="127" y="405" width="20" height="20" fill="#f8f7f5"/>
<rect x="147" y="405" width="20" height="20" fill="#f8f7f5"/>
<rect x="167" y="405" width="20" height="20" fill="#f7f7f5"/>
<rect x="187" y="405" width="20" height="20" fill="#f4f4f3"/>
<rect x="207" y="405" width="20" height="20" fill="#f2f2f1"/>
<rect x="227" y="405" width="20" height="20" fill="#f6f6f5"/>
<rect x="247" y="405" width="20" height="20" fill="#fafafa"/>
<rect x="267" y="405" width="20" height="20" fill="#fdfdfd"/>
<rect x="287" y="405" width="20" height="20" fill="#fdfdfd"/>
<rect x="307" y="405" width="20" height="20" fill="#fdfdfd"/>
<rect x="327" y="405" width="20" height="20" fill="#ffffff"/>
<rect x="347" y="405" width="20" height="20" fill="#ffffff"/>
<rect x="367" y="405" width="20" height="20" fill="#ffffff"/>
<rect x="387" y="405" width="20" height="20" fill="#ffffff"/>
<rect x="407" y="405" width="15" height="20" fill="#ffffff"/>
<rect x="0" y="425" width="7" height="20" fill="#f7f3f3"/>
<rect x="7" y="425" width="20" height="20" fill="#ede9e8"/>
<rect x="27" y="425" width="20" height="20" fill="#e4dedc"/>
<rect x="47" y="425" width="20" height="20" fill="#e1d9d8"/>
<rect x="67" y="425" width="20" height="20" fill="#e3dbda"/>
<rect x="87" y="425" width="20" height="20" fill="#e9e5e4"/>
<rect x="107" y="425" width="20" height="20" fill="#f1eeec"/>
<rect x="127" y="425" width="20" height="20" fill="#f8f7f6"/>
<rect x="147" y="425" width="20" height="20" fill="#f9f8f6"/>
<rect x="167" y="425" width="20" height="20" fill="#f9f8f6"/>
<rect x="187" y="425" width="20" height="20" fill="#f6f6f5"/>
<rect x="207" y="425" width="20" height="20" fill="#f4f4f3"/>
<rect x="227" y="425" width="20" height="20" fill="#f5f5f4"/>
<rect x="247" y="425" width="20" height="20" fill="#fafafa"/>
<rect x="267" y="425" width="20" height="20" fill="#fdfdfd"/>
<rect x="287" y="425" width="20" height="20" fill="#fdfdfd"/>
<rect x="307" y="425" width="20" height="20" fill="#fdfdfd"/>
<rect x="327" y="425" width="20" height="20" fill="#ffffff"/>
<rect x="347" y="425" width="20" height="20" fill="#ffffff"/>
<rect x="367" y="425" width="20" height="20" fill="#ffffff"/>
<rect x="387" y="425" width="20" height="20" fill="#ffffff"/>
<rect x="407" y="425" width="15" height="20" fill="#ffffff"/>
<rect x="0" y="445" width="7" height="20" fill="#f8f5f5"/>
<rect x="7" y="445" width="20" height="20" fill="#f1eded"/>
<rect x="27" y="445" width="20" height="20" fill="#e7e2e1"/>
<rect x="47" y="445" width="20" height="20" fill="#e2dbdb"/>
<rect x="67" y="445" width="20" height="20" fill="#e3dbdb"/>
<rect x="87" y="445" width="20" height="20" fill="#e9e5e3"/>
<rect x="107" y="445" width="20" height="20" fill="#f0edeb"/>
<rect x="127" y="445" width="20" height="20" fill="#f8f7f6"/>
<rect x="147" y="445" width="20" height="20" fill="#f9f8f7"/>
<rect x="167" y="445" width="20" height="20" fill="#f7f7f6"/>
<rect x="187" y="445" width="20" height="20" fill="#f5f5f4"/>
<rect x="207" y="445" width="20" height="20" fill="#f4f4f3"/>
<rect x="227" y="445" width="20" height="20" fill="#f6f6f5"/>
<rect x="247" y="445" width="20" height="20" fill="#fbfbfb"/>
<rect x="267" y="445" width="20" height="20" fill="#fdfdfd"/>
<rect x="287" y="445" width="20" height="20" fill="#fdfdfd"/>
<rect x="307" y="445" width="20" height="20" fill="#fdfdfd"/>
<rect x="327" y="445" width="20" height="20" fill="#ffffff"/>
<rect x="347" y="445" width="20" height="20" fill="#ffffff"/>
<rect x="367" y="445" width="20" height="20" fill="#ffffff"/>
<rect x="387" y="445" width="20" height="20" fill="#ffffff"/>
<rect x="407" y="445" width="15" height="20" fill="#ffffff"/>
<rect x="0" y="465" width="7" height="20" fill="#f8f6f6"/>
<rect x="7" y="465" width="20" height="20" fill="#f3efef"/>
<rect x="27" y="465" width="20" height="20" fill="#e9e3e3"/>
<rect x="47" y="465" width="20" height="20" fill="#e4dcdc"/>
<rect x="67" y="465" width="20" height="20" fill="#e4dcdc"/>
<rect x="87" y="465" width="20" height="20" fill="#ebe7e6"/>
<rect x="107" y="465" width="20" height="20" fill="#efeeed"/>
<rect x="127" y="465" width="20" height="20" fill="#f5f5f4"/>
<rect x="147" y="465" width="20" height="20" fill="#f7f7f6"/>
<rect x="167" y="465" width="20" height="20" fill="#f4f4f4"/>
<rect x="187" y="465" width="20" height="20" fill="#f2f3f2"/>
<rect x="207" y="465" width="20" height="20" fill="#f2f3f2"/>
<rect x="227" y="465" width="20" height="20" fill="#f5f5f5"/>
<rect x="247" y="465" width="20" height="20" fill="#fafafa"/>
<rect x="267" y="465" width="20" height="20" fill="#fdfdfd"/>
<rect x="287" y="465" width="20" height="20" fill="#fdfdfd"/>
<rect x="307" y="465" width="20" height="20" fill="#fdfdfd"/>
<rect x="327" y="465" width="20" height="20" fill="#ffffff"/>
<rect x="347" y="465" width="20" height="20" fill="#ffffff"/>
<rect x="367" y="465" width="20" height="20" fill="#ffffff"/>
<rect x="387" y="465" width="20" height="20" fill="#ffffff"/>
<rect x="407" y="465" width="15" height="20" fill="#ffffff"/>
<rect x="0" y="485" width="7" height="20" fill="#f9f7f7"/>
<rect x="7" y="485" width="20" height="20" fill="#f4f1f1"/>
<rect x="27" y="485" width="20" height="20" fill="#ece7e7"/>
<rect x="47" y="485" width="20" height="20" fill="#e7e0e0"/>
<rect x="67" y="485" width="20" height="20" fill="#e6dfdf"/>
<rect x="87" y="485" width="20" height="20" fill="#ecebea"/>
<rect x="107" y="485" width="20" height="20" fill="#f0f0ef"/>
<rect x="127" y="485" width="20" height="20" fill="#f6f6f6"/>
<rect x="147" y="485" width="20" height="20" fill="#f6f6f6"/>
<rect x="167" y="485" width="20" height="20" fill="#f4f4f4"/>
<rect x="187" y="485" width="20" height="20" fill="#f3f4f4"/>
<rect x="207" y="485" width="20" height="20" fill="#f3f4f3"/>
<rect x="227" y="485" width="20" height="20" fill="#f6f6f6"/>
<rect x="247" y="485" width="20" height="20" fill="#fbfbfb"/>
<rect x="267" y="485" width="20" height="20" fill="#fdfdfd"/>
<rect x="287" y="485" width="20" height="20" fill="#fdfdfd"/>
<rect x="307" y="485" width="20" height="20" fill="#fdfdfd"/>
<rect x="327" y="485" width="20" height="20" fill="#ffffff"/>
<rect x="347" y="485" width="20" height="20" fill="#ffffff"/>
<rect x="367" y="485" width="20" height="20" fill="#ffffff"/>
<rect x="387" y="485" width="20" height="20" fill="#ffffff"/>
<rect x="407" y="485" width="15" height="20" fill="#ffffff"/>
<rect x="0" y="505" width="7" height="20" fill="#faf8f8"/>
<rect x="7" y="505" width="20" height="20" fill="#f5f3f2"/>
<rect x="27" y="505" width="20" height="20" fill="#eeeaea"/>
<rect x="47" y="505" width="20" height="20" fill="#ebe5e5"/>
<rect x="67" y="505" width="20" height="20" fill="#ebe5e5"/>
<rect x="87" y="505" width="20" height="20" fill="#eeeeed"/>
<rect x="107" y="505" width="20" height="20" fill="#f3f1f3"/>
<rect x="127" y="505" width="20" height="20" fill="#f8f8f8"/>
<rect x="147" y="505" width="20" height="20" fill="#f8f8f8"/>
<rect x="167" y="505" width="20" height="20" fill="#f6f6f6"/>
<rect x="187" y="505" width="20" height="20" fill="#f4f5f5"/>
<rect x="207" y="505" width="20" height="20" fill="#f5f6f6"/>
<rect x="227" y="505" width="20" height="20" fill="#f8f8f8"/>
<rect x="247" y="505" width="20" height="20" fill="#fcfcfc"/>
<rect x="267" y="505" width="20" height="20" fill="#fdfdfd"/>
<rect x="287" y="505" width="20" height="20" fill="#fdfdfd"/>
<rect x="307" y="505" width="20" height="20" fill="#fdfdfd"/>
<rect x="327" y="505" width="20" height="20" fill="#ffffff"/>
<rect x="347" y="505" width="20" height="20" fill="#ffffff"/>
<rect x="367" y="505" width="20" height="20" fill="#ffffff"/>
<rect x="387" y="505" width="20" height="20" fill="#ffffff"/>
<rect x="407" y="505" width="15" height="20" fill="#ffffff"/>
<rect x="0" y="525" width="7" height="8" fill="#faf8f8"/>
<rect x="7" y="525" width="20" height="8" fill="#f5f3f2"/>
<rect x="27" y="525" width="20" height="8" fill="#eeeaea"/>
<rect x="47" y="525" width="20" height="8" fill="#ebe5e5"/>
<rect x="67" y="525" width="20" height="8" fill="#ebe5e5"/>
<rect x="87" y="525" width="20" height="8" fill="#eeeeed"/>
<rect x="107" y="525" width="20" height="8" fill="#f3f1f3"/>
<rect x="127" y="525" width="20" height="8" fill="#f8f8f8"/>
<rect x="147" y="525" width="20" height="8" fill="#f8f8f8"/>
<rect x="167" y="525" width="20" height="8" fill="#f6f6f6"/>
<rect x="187" y="525" width="20" height="8" fill="#f4f5f5"/>
<rect x="207" y="525" width="20" height="8" fill="#f5f6f6"/>
<rect x="227" y="525" width="20" height="8" fill="#f8f8f8"/>
<rect x="247" y="525" width="20" height="8" fill="#fcfcfc"/>
<rect x="267" y="525" width="20" height="8" fill="#fdfdfd"/>
<rect x="287" y="525" width="20" height="8" fill="#fdfdfd"/>
<rect x="307" y="525" width="20" height="8" fill="#fdfdfd"/>
<rect x="327" y="525" width="20" height="8" fill="#ffffff"/>
<rect x="347" y="525" width="20" height="8" fill="#ffffff"/>
<rect x="367" y="525" width="20" height="8" fill="#ffffff"/>
<rect x="387" y="525" width="20" height="8" fill="#ffffff"/>
<rect x="407" y="525" width="15" height="8" fill="#ffffff"/>
</svg>
<!-- scrollbar -->
<div class="a" style="left:1863px;top:292px;width:18px;height:537px;background:#fafafa;"></div>
<svg style="left:0;top:0" width="1900" height="450"><polygon points="1866.8,311 1872.6,302.6 1878.4,311" fill="#8e8e8e" stroke="#8e8e8e" stroke-width="0.8" stroke-linejoin="round"/></svg>
<div class="a" style="left:1867px;top:321px;width:11px;height:117px;border-radius:6px;background:#8f8f8f;"></div>
<svg style="left:0;top:0" width="1900" height="900" fill="none" stroke="#6e727d" stroke-width="1.5" stroke-linejoin="round">
<rect x="1734.7" y="334.3" width="14.8" height="11" rx="1.8"/>
<path d="M1745 334.3 L1745 330.4 Q1745 326.6 1749 326.6 Q1753 326.6 1753 330.4 L1753 332.8"/>
<path d="M1742.1 337.8 L1742.1 341.6" stroke-width="1.7"/>
<path d="M1780.4 329.2 L1797.2 329.2"/>
<path d="M1786.2 329.2 L1786.2 326.8 L1791.6 326.8 L1791.6 329.2"/>
<path d="M1782.2 329.2 L1783.4 345.2 L1794.4 345.2 L1795.6 329.2"/>
<path d="M1786.8 332.8 L1787.4 342.0 M1791 332.8 L1790.4 342.0" stroke-width="1.3"/>
<rect x="1734.7" y="425.3" width="14.8" height="11" rx="1.8"/>
<path d="M1745 425.3 L1745 421.4 Q1745 417.6 1749 417.6 Q1753 417.6 1753 421.4 L1753 423.8"/>
<path d="M1742.1 428.8 L1742.1 432.6" stroke-width="1.7"/>
<path d="M1780.4 420.2 L1797.2 420.2"/>
<path d="M1786.2 420.2 L1786.2 417.8 L1791.6 417.8 L1791.6 420.2"/>
<path d="M1782.2 420.2 L1783.4 436.2 L1794.4 436.2 L1795.6 420.2"/>
<path d="M1786.8 423.8 L1787.4 433.0 M1791 423.8 L1790.4 433.0" stroke-width="1.3"/>
<rect x="1736.4" y="516.6" width="15" height="11.2" rx="1.8"/>
<path d="M1739 516.6 L1739 514.0 Q1739 508.6 1743.9 508.6 Q1748.8 508.6 1748.8 514.0 L1748.8 516.6"/>
<path d="M1743.9 520.4 L1743.9 524.2" stroke-width="1.7"/>
<path d="M1780.4 511.2 L1797.2 511.2"/>
<path d="M1786.2 511.2 L1786.2 508.8 L1791.6 508.8 L1791.6 511.2"/>
<path d="M1782.2 511.2 L1783.4 527.2 L1794.4 527.2 L1795.6 511.2"/>
<path d="M1786.8 514.8 L1787.4 524.0 M1791 514.8 L1790.4 524.0" stroke-width="1.3"/>
<rect x="1736.4" y="607.6" width="15" height="11.2" rx="1.8"/>
<path d="M1739 607.6 L1739 605.0 Q1739 599.6 1743.9 599.6 Q1748.8 599.6 1748.8 605.0 L1748.8 607.6"/>
<path d="M1743.9 611.4 L1743.9 615.2" stroke-width="1.7"/>
<path d="M1780.4 602.2 L1797.2 602.2"/>
<path d="M1786.2 602.2 L1786.2 599.8 L1791.6 599.8 L1791.6 602.2"/>
<path d="M1782.2 602.2 L1783.4 618.2 L1794.4 618.2 L1795.6 602.2"/>
<path d="M1786.8 605.8 L1787.4 615.0 M1791 605.8 L1790.4 615.0" stroke-width="1.3"/>
<rect x="1736.4" y="698.6" width="15" height="11.2" rx="1.8"/>
<path d="M1739 698.6 L1739 696.0 Q1739 690.6 1743.9 690.6 Q1748.8 690.6 1748.8 696.0 L1748.8 698.6"/>
<path d="M1743.9 702.4 L1743.9 706.2" stroke-width="1.7"/>
<path d="M1780.4 693.2 L1797.2 693.2"/>
<path d="M1786.2 693.2 L1786.2 690.8 L1791.6 690.8 L1791.6 693.2"/>
<path d="M1782.2 693.2 L1783.4 709.2 L1794.4 709.2 L1795.6 693.2"/>
<path d="M1786.8 696.8 L1787.4 706.0 M1791 696.8 L1790.4 706.0" stroke-width="1.3"/>
<rect x="1736.4" y="789.6" width="15" height="11.2" rx="1.8"/>
<path d="M1739 789.6 L1739 787.0 Q1739 781.6 1743.9 781.6 Q1748.8 781.6 1748.8 787.0 L1748.8 789.6"/>
<path d="M1743.9 793.4 L1743.9 797.2" stroke-width="1.7"/>
<path d="M1780.4 784.2 L1797.2 784.2"/>
<path d="M1786.2 784.2 L1786.2 781.8 L1791.6 781.8 L1791.6 784.2"/>
<path d="M1782.2 784.2 L1783.4 800.2 L1794.4 800.2 L1795.6 784.2"/>
<path d="M1786.8 787.8 L1787.4 797.0 M1791 787.8 L1790.4 797.0" stroke-width="1.3"/>
</svg>
<!-- pagination -->
<div class="a" style="left:866px;top:843px;width:449px;height:45px;border:1px solid #dfe1e6;border-radius:5px;"></div>
<div class="a" style="left:929px;top:844px;width:1px;height:43px;background:#e3e5e9;"></div>
<div class="a" style="left:985px;top:844px;width:1px;height:43px;background:#e3e5e9;"></div>
<div class="a" style="left:1059px;top:851px;width:1px;height:29px;background:#e3e5e9;"></div>
<svg style="left:0;top:0" width="1300" height="900" fill="none" stroke="#a0a4ad" stroke-width="1.5"><polyline points="902.6,858 894,865.2 902.6,872.4"/><polyline points="1013.2,858 1021.8,865.2 1013.2,872.4"/><polyline points="1170.3,861.4 1176.6,868.8 1182.9,861.4" stroke="#9a9ea8" stroke-width="1.3"/></svg>
<div class="a" style="left:1070px;top:850px;width:45px;height:30px;border:1px solid #cdd0d7;border-radius:4px;"></div>
<div class="a" style="left:1125px;top:850px;width:68px;height:30px;border:1px solid #cdd0d7;border-radius:4px;"></div>
<div class="t" style="left:69.7px;top:22.0px;font-size:29.5px;font-weight:700;color:#3d5bdc;letter-spacing:-0.360px;-webkit-text-stroke:0.0px #3d5bdc;">Lofty</div>
<div class="t" style="left:189.4px;top:29.4px;font-size:18px;font-weight:400;color:#4b5162;letter-spacing:1.011px;-webkit-text-stroke:0.25px #4b5162;">People</div>
<div class="t" style="left:310.1px;top:29.4px;font-size:18px;font-weight:400;color:#4b5162;letter-spacing:1.268px;-webkit-text-stroke:0.25px #4b5162;">Transactions</div>
<div class="t" style="left:463.5px;top:29.4px;font-size:18px;font-weight:400;color:#4b5162;letter-spacing:1.182px;-webkit-text-stroke:0.25px #4b5162;">Calendar</div>
<div class="t" style="left:582.1px;top:29.4px;font-size:18px;font-weight:400;color:#4b5162;letter-spacing:1.570px;-webkit-text-stroke:0.25px #4b5162;">Listings</div>
<div class="t" style="left:690.2px;top:29.4px;font-size:18px;font-weight:400;color:#4b5162;letter-spacing:1.561px;-webkit-text-stroke:0.25px #4b5162;">Marketing</div>
<div class="t" style="left:818.3px;top:29.4px;font-size:18px;font-weight:400;color:#4b5162;letter-spacing:1.472px;-webkit-text-stroke:0.25px #4b5162;">Reporting</div>
<div class="t" style="left:945.4px;top:29.4px;font-size:18px;font-weight:400;color:#4b5162;letter-spacing:1.436px;-webkit-text-stroke:0.25px #4b5162;">Website</div>
<div class="t" style="left:1055.7px;top:29.4px;font-size:18px;font-weight:400;color:#4b5162;letter-spacing:1.417px;-webkit-text-stroke:0.25px #4b5162;">Marketplace</div>
<div class="t" style="left:1205.2px;top:29.4px;font-size:18px;font-weight:400;color:#3d5bdc;letter-spacing:1.539px;-webkit-text-stroke:0.25px #3d5bdc;">Settings</div>
<div class="t" style="left:66.8px;top:117.5px;font-size:19.5px;font-weight:700;color:#ffffff;letter-spacing:1.402px;-webkit-text-stroke:0.0px #ffffff;">TEAM</div>
<div class="t" style="left:23.5px;top:194.3px;font-size:17px;font-weight:700;color:#ffffff;letter-spacing:0.862px;-webkit-text-stroke:0.0px #ffffff;">Team User Settings</div>
<div class="t" style="left:35.9px;top:243.1px;font-size:17px;font-weight:400;color:#b3b6c0;letter-spacing:0.956px;-webkit-text-stroke:0.25px #b3b6c0;">Users</div>
<div class="t" style="left:35.9px;top:288.1px;font-size:17px;font-weight:400;color:#b3b6c0;letter-spacing:0.808px;-webkit-text-stroke:0.25px #b3b6c0;">Vendor / Partner</div>
<div class="t" style="left:35.9px;top:333.1px;font-size:17px;font-weight:400;color:#b3b6c0;letter-spacing:0.939px;-webkit-text-stroke:0.25px #b3b6c0;">Reporting</div>
<div class="t" style="left:23.5px;top:393.1px;font-size:17px;font-weight:700;color:#ffffff;letter-spacing:0.798px;-webkit-text-stroke:0.0px #ffffff;">Communication</div>
<div class="t" style="left:35.9px;top:442.1px;font-size:17px;font-weight:400;color:#b3b6c0;letter-spacing:0.798px;-webkit-text-stroke:0.25px #b3b6c0;">Call &amp; Text</div>
<div class="t" style="left:35.9px;top:487.1px;font-size:17px;font-weight:400;color:#b3b6c0;letter-spacing:0.504px;-webkit-text-stroke:0.25px #b3b6c0;">Email</div>
<div class="t" style="left:23.5px;top:546.1px;font-size:17px;font-weight:700;color:#ffffff;letter-spacing:0.822px;-webkit-text-stroke:0.0px #ffffff;">Lead Settings</div>
<div class="t" style="left:35.9px;top:595.6px;font-size:17px;font-weight:400;color:#b3b6c0;letter-spacing:0.700px;-webkit-text-stroke:0.25px #b3b6c0;">Lead Capture</div>
<div class="t" style="left:35.9px;top:640.1px;font-size:17px;font-weight:400;color:#b3b6c0;letter-spacing:0.654px;-webkit-text-stroke:0.25px #b3b6c0;">Lead Routing</div>
<div class="t" style="left:35.9px;top:685.1px;font-size:17px;font-weight:400;color:#b3b6c0;letter-spacing:0.676px;-webkit-text-stroke:0.25px #b3b6c0;">Reassignment Group</div>
<div class="t" style="left:35.9px;top:730.1px;font-size:17px;font-weight:400;color:#b3b6c0;letter-spacing:0.623px;-webkit-text-stroke:0.25px #b3b6c0;">Lead Pond</div>
<div class="t" style="left:35.9px;top:775.1px;font-size:17px;font-weight:400;color:#b3b6c0;letter-spacing:0.843px;-webkit-text-stroke:0.25px #b3b6c0;">Sources</div>
<div class="t" style="left:35.9px;top:820.1px;font-size:17px;font-weight:400;color:#ffffff;letter-spacing:1.269px;-webkit-text-stroke:0.25px #ffffff;">Tags</div>
<div class="t" style="left:35.9px;top:865.1px;font-size:17px;font-weight:400;color:#b3b6c0;letter-spacing:0.757px;-webkit-text-stroke:0.25px #b3b6c0;">Custom Fields</div>
<div class="t" style="left:298.4px;top:109.9px;font-size:26px;font-weight:700;color:#202129;letter-spacing:0.895px;-webkit-text-stroke:0.0px #202129;-webkit-text-stroke:0.35px #202129;">Lead Settings - Tags</div>
<div class="t" style="left:1783.3px;top:115.6px;font-size:17px;font-weight:400;color:#ffffff;letter-spacing:1.041px;-webkit-text-stroke:0.25px #ffffff;">Add New</div>
<div class="t" style="left:350.2px;top:195.8px;font-size:17px;font-weight:400;color:#c3c7cf;letter-spacing:0.650px;-webkit-text-stroke:0.25px #c3c7cf;">Search by tag name...</div>
<div class="t" style="left:324.0px;top:255.6px;font-size:17px;font-weight:700;color:#40475a;letter-spacing:1.406px;-webkit-text-stroke:0.0px #40475a;">Name</div>
<div class="t" style="left:1221.7px;top:255.6px;font-size:17px;font-weight:700;color:#40475a;letter-spacing:0.906px;-webkit-text-stroke:0.0px #40475a;">Created by</div>
<div class="t" style="left:1738.2px;top:255.8px;font-size:17px;font-weight:700;color:#40475a;letter-spacing:0.728px;-webkit-text-stroke:0.0px #40475a;">Action</div>
<div class="t" style="left:323.9px;top:329.0px;font-size:16.5px;font-weight:400;color:#4d5263;letter-spacing:0.917px;-webkit-text-stroke:0.25px #4d5263;">10 Goodfellow Court nepean ON</div>
<div class="t" style="left:323.9px;top:420.0px;font-size:16.5px;font-weight:400;color:#4d5263;letter-spacing:0.705px;-webkit-text-stroke:0.25px #4d5263;">16401 Calle Feliz</div>
<div class="t" style="left:323.9px;top:511.0px;font-size:16.5px;font-weight:400;color:#4d5263;letter-spacing:1.092px;-webkit-text-stroke:0.25px #4d5263;">AI Captured</div>
<div class="t" style="left:323.9px;top:602.0px;font-size:16.5px;font-weight:400;color:#4d5263;letter-spacing:0.965px;-webkit-text-stroke:0.25px #4d5263;">AI: Has Agent</div>
<div class="t" style="left:323.9px;top:693.0px;font-size:16.5px;font-weight:400;color:#4d5263;letter-spacing:0.979px;-webkit-text-stroke:0.25px #4d5263;">AI: Just Looking</div>
<div class="t" style="left:323.9px;top:784.0px;font-size:16.5px;font-weight:400;color:#4d5263;letter-spacing:0.891px;-webkit-text-stroke:0.25px #4d5263;">AI: Need Financing</div>
<div class="t" style="left:953.5px;top:857.4px;font-size:17px;font-weight:400;color:#3d5bdc;letter-spacing:0.000px;-webkit-text-stroke:0.25px #3d5bdc;">1</div>
<div class="t" style="left:1076.7px;top:857.2px;font-size:17px;font-weight:400;color:#2a2d36;letter-spacing:0.000px;-webkit-text-stroke:0.25px #2a2d36;">1</div>
<div class="t" style="left:1138.2px;top:857.2px;font-size:17px;font-weight:400;color:#2a2d36;letter-spacing:0.000px;-webkit-text-stroke:0.25px #2a2d36;transform:scaleX(1.13);transform-origin:0 0;">50</div>
<div class="t" style="left:1198.8px;top:856.5px;font-size:16px;font-weight:400;color:#7c808c;letter-spacing:-0.008px;-webkit-text-stroke:0.25px #7c808c;">items per page</div>
<!-- floating widget -->
<div class="a" style="left:1853px;top:649px;width:60px;height:230px;background:#4361df;border-radius:28px 0 0 28px;box-shadow:-3px 6px 14px rgba(70,90,200,0.18);"></div>
<div class="a" style="left:1896px;top:637px;width:12px;height:12px;background:radial-gradient(circle at 0 0, rgba(63,95,220,0) 11.5px, #4361df 12px);"></div>
<div class="a" style="left:1896px;top:879px;width:12px;height:12px;background:radial-gradient(circle at 0 100%, rgba(63,95,220,0) 11.5px, #4361df 12px);"></div>
<div class="a" style="left:1868px;top:727px;width:26px;height:1px;background:rgba(255,255,255,0.22);"></div>
<div class="a" style="left:1868px;top:800px;width:26px;height:1px;background:rgba(255,255,255,0.22);"></div>
<div class="a" style="left:1846px;top:680.3px;width:14.8px;height:14.8px;border-radius:50%;background:#ec3340;box-sizing:border-box;border:2px solid #fff;"></div>
<svg style="left:0;top:0" width="1912" height="924">
  <path d="M1869.6 690.3 A10.8 10.8 0 1 1 1882.3 700.9" fill="none" stroke="#fff" stroke-width="2.8" stroke-linecap="round"/>
  <rect x="1867.4" y="686.6" width="4.8" height="8.2" rx="2.4" fill="#fff"/>
  <rect x="1872.8" y="683" width="15.9" height="14" rx="5" fill="#fff"/>
  <circle cx="1880.9" cy="701.2" r="2.1" fill="#fff"/>
  <circle cx="1878.1" cy="690" r="1.15" fill="#3b4fa8"/><circle cx="1883.2" cy="690" r="1.15" fill="#3b4fa8"/>
  <path d="M1871.2 751.2 Q1867.6 753.5 1868.3 757.6 Q1870 765.5 1878.4 771.6 Q1883.8 775.5 1889 775.6 Q1892.3 775.3 1893.4 771.8 L1888.2 766.4 Q1886.3 765.7 1885 767.2 L1883.6 768.8 Q1880.4 767.4 1877.5 764.1 Q1874.8 761 1873.6 758.5 L1875.4 756.8 Q1876.7 755.3 1876 753.6 Z" fill="#fff"/>
  <path d="M1880.6 824.2 Q1894.2 824.2 1894.2 833.6 Q1894.2 842.8 1880.6 842.8 Q1878.6 842.8 1876.6 842.4 L1870.2 847.2 L1871.4 841.2 Q1867 838.6 1867 833.6 Q1867 824.2 1880.6 824.2 Z" fill="#fff"/>
  <circle cx="1875.4" cy="833.6" r="1.25" fill="#4361df"/><circle cx="1880.6" cy="833.6" r="1.25" fill="#4361df"/><circle cx="1885.8" cy="833.6" r="1.25" fill="#4361df"/>
</svg>
</div></div>
</body></html>
